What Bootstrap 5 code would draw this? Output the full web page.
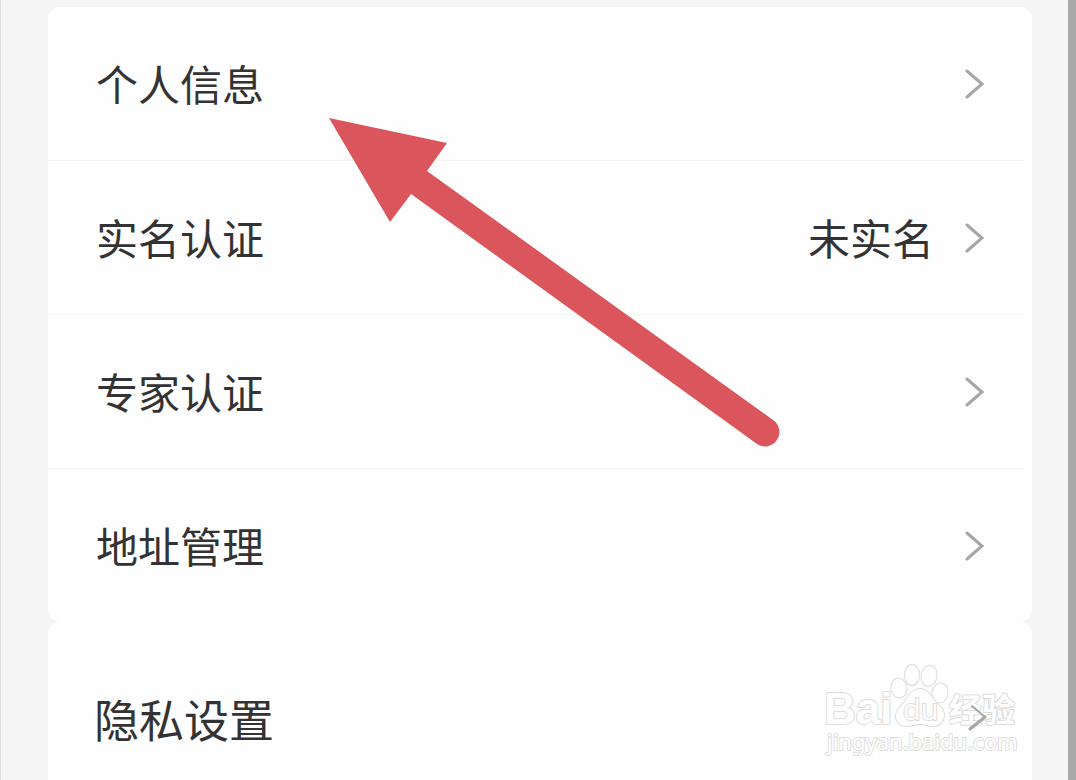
<!DOCTYPE html>
<html lang="zh-CN">
<head>
<meta charset="utf-8">
<meta name="viewport" content="width=device-width, initial-scale=1">
<title>个人信息</title>
<link href="https://cdn.jsdelivr.net/npm/bootstrap@5.3.0/dist/css/bootstrap.min.css" rel="stylesheet">
<style>
  body {
    background: #f5f5f5;
    font-family: "Noto Sans CJK SC", sans-serif;
    color: #333;
  }
  .screen {
    border-left: 1px solid #dedede;
    border-right: 8px solid #a9a9a9;
    padding: 7px 36px 0 47px;
  }
  .panel { background: #fefefe; border-radius: 12px; }
  .panel-last { border-radius: 12px 12px 0 0; }
  .entry {
    color: #333;
    font-size: 42px;
    line-height: 60px;
    padding: 46px 46px 47px 48px;
  }
  .entry:hover { color: #000; }
  .split { height: 1px; background: #f3f3f3; margin-right: 8px; }
  .entry-value { margin-right: 30px; }
  .entry-large { font-size: 45px; padding: 67px 44px 0 46px; }
  .chevron { fill: none; stroke: #a6a6a6; stroke-width: 3; stroke-linecap: round; stroke-linejoin: miter; }
  .pointer { left: 328px; top: 117px; pointer-events: none; }
  .watermark { right: 12px; top: 38px; pointer-events: none; }
  .watermark text, .watermark .paw { fill: #fefefe; stroke: #dcdcdc; stroke-width: 2; paint-order: stroke; stroke-linejoin: round; }
  .wm-brand { font: 700 44px "Liberation Sans", sans-serif; }
  .wm-du { font: 400 29px "Open Sans", sans-serif; }
  .wm-cjk { font: 700 33px "Noto Sans CJK SC", sans-serif; }
  .watermark .wm-url { font: 400 22px "Noto Sans", sans-serif; stroke: #e0e0e0; }
</style>
</head>
<body>
<main class="screen min-vh-100 d-flex flex-column position-relative overflow-hidden">
  <nav class="panel" aria-label="账号">
    <a href="#info" class="entry d-flex align-items-center text-decoration-none">
      <span class="me-auto">个人信息</span>
      <svg class="chevron" width="22" height="32" aria-hidden="true"><path d="M3 4 18 17 3 30"/></svg>
    </a>
    <div class="split"></div>
    <a href="#realname" class="entry d-flex align-items-center text-decoration-none">
      <span class="me-auto">实名认证</span>
      <span class="entry-value">未实名</span>
      <svg class="chevron" width="22" height="32" aria-hidden="true"><path d="M3 4 18 17 3 30"/></svg>
    </a>
    <div class="split"></div>
    <a href="#expert" class="entry d-flex align-items-center text-decoration-none">
      <span class="me-auto">专家认证</span>
      <svg class="chevron" width="22" height="32" aria-hidden="true"><path d="M3 4 18 17 3 30"/></svg>
    </a>
    <div class="split"></div>
    <a href="#address" class="entry d-flex align-items-center text-decoration-none">
      <span class="me-auto">地址管理</span>
      <svg class="chevron" width="22" height="32" aria-hidden="true"><path d="M3 4 18 17 3 30"/></svg>
    </a>
  </nav>
  <nav class="panel panel-last flex-grow-1 position-relative" aria-label="隐私">
    <svg class="watermark position-absolute" width="198" height="100" role="img" aria-label="Baidu 经验">
      <text class="wm-brand" x="2" y="64">Bai</text>
      <g class="paw">
        <ellipse cx="77" cy="28" rx="7.500" ry="9.500" transform="rotate(-10 77 28)"/>
        <ellipse cx="90" cy="15" rx="7" ry="10"/>
        <ellipse cx="107" cy="16" rx="7.500" ry="10" transform="rotate(12 107 16)"/>
        <ellipse cx="118" cy="33" rx="7.500" ry="9.500" transform="rotate(10 118 33)"/>
        <path d="M98 29C91 29 87 34 84 40C81 45 74 48 74 56C74 63 79 66 85 66C91 66 93 64 98 64C103 64 106 66 111 66C118 66 122 61 122 55C122 47 115 45 112 40C108 34 105 29 98 29Z"/>
      </g>
      <text class="wm-du" x="81" y="60">du</text>
      <text class="wm-cjk" x="127" y="62">经验</text>
      <text class="wm-url" x="5" y="90">jingyan.baidu.com</text>
    </svg>
    <a href="#privacy" class="entry entry-large d-flex align-items-center text-decoration-none position-relative">
      <span class="me-auto">隐私设置</span>
      <svg class="chevron" width="22" height="32" aria-hidden="true"><path stroke-width="2" d="M6 3 19 14"/><path d="M19 14 4 26"/></svg>
    </a>
  </nav>
  <svg class="pointer position-absolute" width="452" height="332" aria-hidden="true">
    <path fill="#db565c" d="M0 1 118 26 98 54 444 303A14 14 0 0 1 428 327L82 77 61 105Z"/>
  </svg>
</main>
<script src="https://cdn.jsdelivr.net/npm/bootstrap@5.3.0/dist/js/bootstrap.bundle.min.js"></script>
</body>
</html>
